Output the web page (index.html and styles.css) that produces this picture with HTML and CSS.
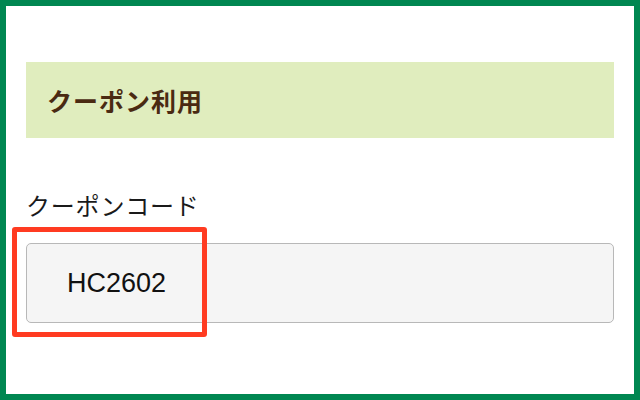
FILE: index.html
```html
<!DOCTYPE html>
<html lang="ja">

<head>
    <meta charset="UTF-8">
    <meta name="viewport" content="width=device-width, initial-scale=1.0">
    <title>クーポン利用</title>
    <link rel="stylesheet" href="styles.css">
</head>

<body>

    <div class="frame">
        <h2 class="section-title">クーポン利用</h2>

        <div class="field">
            <label class="field-label" for="coupon">クーポンコード</label>
            <div class="input-wrap">
                <input class="coupon-input" id="coupon" type="text" value="HC2602" readonly>
                <!-- red marker around the entered code -->
                <span class="highlight"></span>
            </div>
        </div>
    </div>

</body>

</html>
```

FILE: styles.css
```css
body {
    margin: 0;
    padding: 0;
    background-color: #fff;
    font-family: 'Liberation Sans', 'Noto Sans CJK JP', sans-serif;
    color: #222;
}

.frame {
    box-sizing: border-box;
    width: 640px;
    height: 400px;
    border: 6px solid #008751;
    padding: 56px 20px 0 20px;
}

.section-title {
    display: flex;
    align-items: center;
    height: 76px;
    margin: 0;
    padding-left: 21px;
    background-color: #e0edbe;
    color: #4a2a12;
    font-family: 'Noto Sans CJK JP', sans-serif;
    font-size: 25px;
    font-weight: bold;
    letter-spacing: 1px;
}

.field {
    margin-top: 50px;
}

.field-label {
    display: block;
    font-family: 'Noto Sans CJK JP', sans-serif;
    font-size: 24px;
    line-height: 34px;
    letter-spacing: 0.8px;
    color: #1a1a1a;
    margin-bottom: 21px;
}

.input-wrap {
    position: relative;
}

.coupon-input {
    display: block;
    box-sizing: border-box;
    width: 100%;
    height: 80px;
    padding: 0 0 0 40px;
    border: 1px solid #b8b8b8;
    border-radius: 5px;
    background-color: #f5f5f5;
    font-family: 'Liberation Sans', sans-serif;
    font-size: 27px;
    color: #111;
    outline: none;
}

.highlight {
    position: absolute;
    left: -14px;
    top: -16px;
    width: 195px;
    height: 110px;
    box-sizing: border-box;
    border: 5px solid #ff3b21;
    border-radius: 3px;
}
```
